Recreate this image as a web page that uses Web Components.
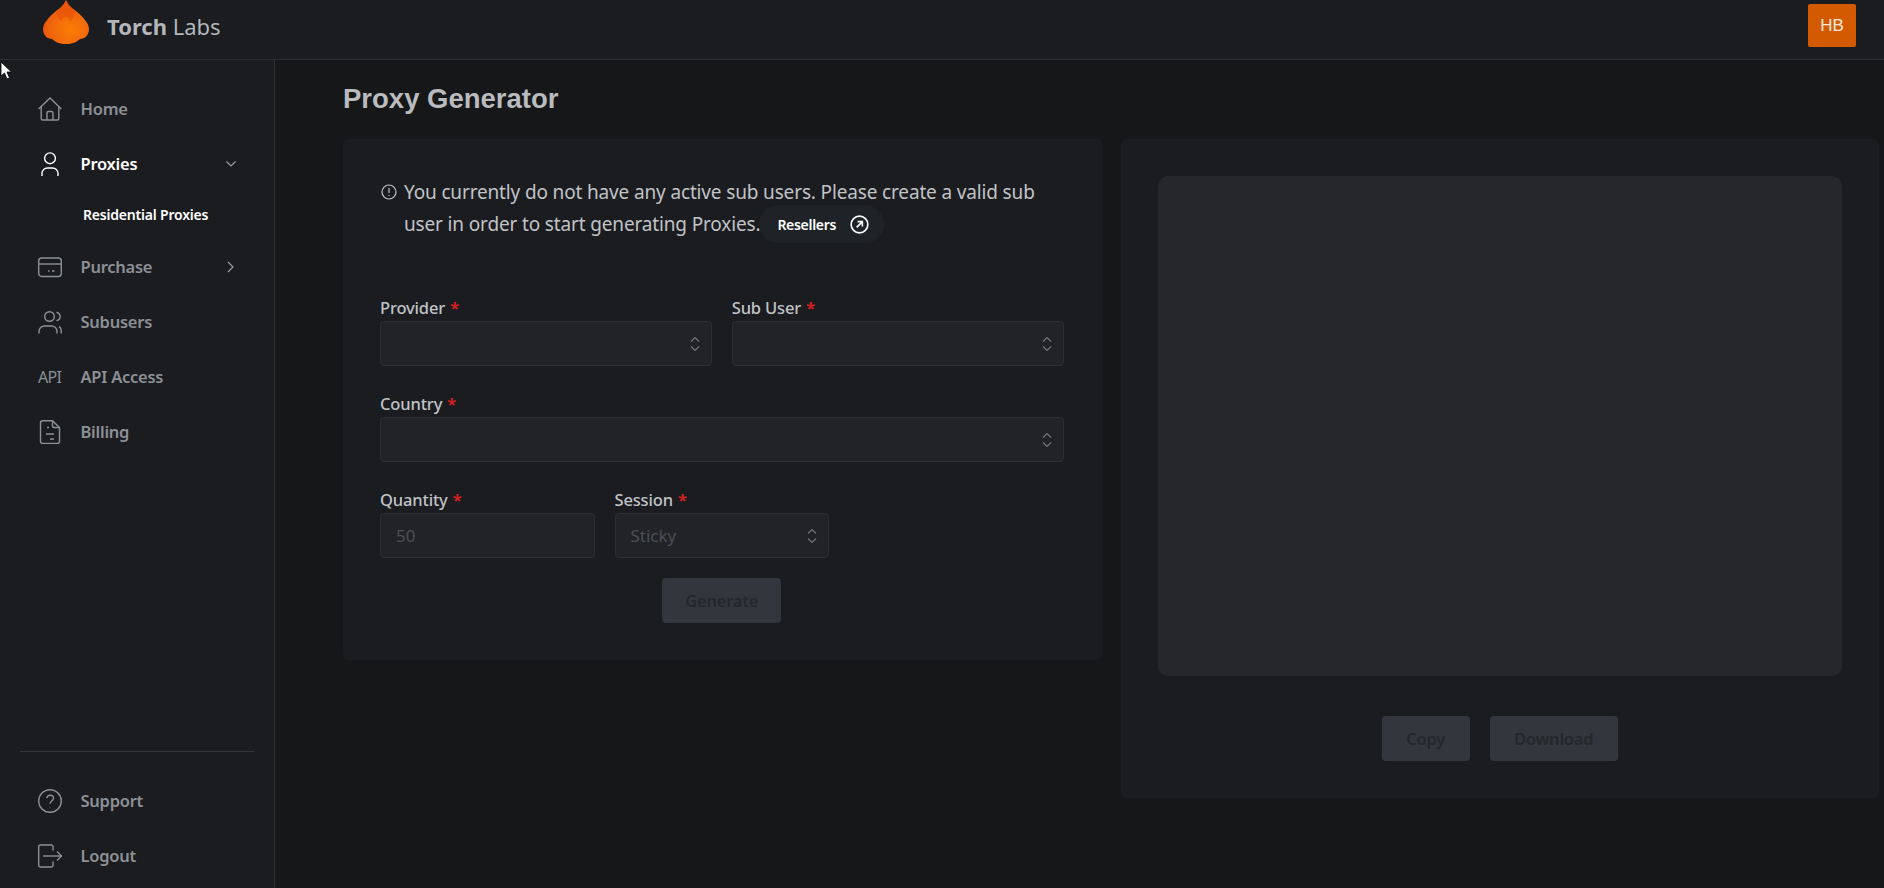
<!DOCTYPE html>
<html lang="en">
<head>
<meta charset="utf-8">
<title>Proxy Generator</title>
<style>
html, body { margin: 0; height: 100%; background: #151719; overflow: hidden; }
body { font-family: "Noto Sans", sans-serif; }
</style>
</head>
<body>
<app-shell>
    <proxy-form slot="left"></proxy-form>
    <output-panel slot="right"></output-panel>
</app-shell>
<mouse-cursor></mouse-cursor>

<script>
const ICONS = {
    home: `<path d="M0.700 12 12 1l11.300 11"/><path d="M3.200 9.500v12c0 .8.700 1.500 1.500 1.500h14.600c.8 0 1.500-.7 1.500-1.500v-12"/><path d="M9 23v-7c0-.8.700-1.500 1.500-1.500h3c.8 0 1.500.7 1.500 1.500v7"/>`,
    user: `<circle cx="12" cy="6.300" r="5.400"/><path d="M4 24v-2.500c0-3.200 2.600-5.500 5.500-5.500h5c2.900 0 5.500 2.300 5.500 5.500V24"/>`,
    card: `<rect x="0.700" y="3" width="22.600" height="18.500" rx="3"/><path d="M1 9h22"/><path d="M10 16h1.500M14 16h2.500"/>`,
    users: `<circle cx="11.500" cy="6.500" r="4.800"/><path d="M18.500 2.200c2.400.6 3.600 2.300 3.600 4.200s-1.200 3.600-3.600 4.200"/><path d="M1 23.500v-2c0-3.200 2.600-5.500 5.500-5.500h7c3 0 5.500 2.300 5.500 5.500v2"/><path d="M21 16.300c1.300.8 2.200 2.500 2.200 4.200v3"/>`,
    bill: `<path d="M14.500 0.700H4.500c-1 0-2 .9-2 2v18.800c0 1 1 2 2 2h15c1 0 2-1 2-2V7.500L14.500 0.700z"/><path d="M14.500 1.200V6c0 1 .6 1.500 1.500 1.500h5"/><path d="M9 7.500h2M8 14h8M12 19h4"/>`,
    help: `<circle cx="12" cy="12" r="11.300"/><path d="M8.800 9.200c.3-1.900 1.700-3 3.400-3 1.900 0 3.300 1.300 3.300 3 0 2.800-3.500 2.900-3.500 5.600"/><path d="M12 18.200v.3"/>`,
    logout: `<path d="M15 6.500V2.700c0-1-.8-1.700-1.700-1.700H2.200C1.300 1 .7 1.700.7 2.700v18.600c0 1 .6 1.700 1.500 1.700h11.100c.9 0 1.700-.7 1.700-1.700v-3.800"/><path d="M5 12h18.500"/><path d="M19 7.500l4.500 4.500-4.500 4.500"/>`
}

class AppShell extends HTMLElement {
    constructor(){
        super()
        this.attachShadow({mode:"open"})
        this.shadowRoot.innerHTML = `
        <style>
        :host { display: flex; flex-direction: column; height: 888px; }
        .body { flex: 1; display: flex; min-height: 0; }
        main { flex: 1; min-width: 0; padding: 24px 5px 0 68px; }
        h1 {
            margin: 0 0 25px;
            font: bold 27.500px/30px "Liberation Sans", sans-serif;
            color: #b9bbbf;
        }
        .cols { display: grid; grid-template-columns: 1fr 1fr; gap: 19px; align-items: start; }
        </style>
        <top-bar></top-bar>
        <div class="body">
            <side-nav></side-nav>
            <main>
                <h1>Proxy Generator</h1>
                <div class="cols">
                    <slot name="left"></slot>
                    <slot name="right"></slot>
                </div>
            </main>
        </div>`
    }
}

class TopBar extends HTMLElement {
    constructor(){
        super()
        this.attachShadow({mode:"open"})
        this.shadowRoot.innerHTML = `
        <style>
        :host {
            display: flex; height: 59px; flex: none;
            background: #1a1c20; border-bottom: 1px solid #2d2f32;
            padding: 0 28px 0 43px; overflow: hidden;
        }
        svg { width: 46px; height: 44px; flex: none; }
        .name {
            margin: 9px 0 0 18px;
            font: 400 22px/34px "Noto Sans", sans-serif;
            color: #b4b6ba; height: 34px;
        }
        .name b { font-weight: 700; }
        .avatar {
            margin: 4px 0 0 auto; width: 48px; height: 43px;
            background: #d45a00; border-radius: 2px;
            display: flex; align-items: center; justify-content: center;
            font: 400 17px "Liberation Sans", sans-serif; color: #fbe9dc;
        }
        </style>
        <svg viewBox="0 0 46 44">
            <defs>
                <radialGradient id="fl" cx="0.600" cy="0.680" r="0.620">
                    <stop offset="0" stop-color="#fa7d05"/>
                    <stop offset="0.600" stop-color="#f2690b"/>
                    <stop offset="1" stop-color="#e8560e"/>
                </radialGradient>
            </defs>
            <path fill="url(#fl)" d="M23 0C21.500 3 20 5.500 18 7.500L13 11C7 16 0 23 0 29C0 35 4 39 9 39C12 42 17 44 23 44C29 44 34 42 37 39C42 39 46 35 46 29C46 23 39 16 33 11L28 7.500C26 5.500 24.500 3 23 0Z"/>
            <path fill="#e85209" opacity="0.700" d="M23 0C25 4 27 6.500 33 11C32 15 30 19 27 21C26 18 24.500 17 22.500 17C20.500 17 19 19 18 21C15 18 13.500 15 13 11C19 6.500 21 4 23 0Z"/>
        </svg>
        <div class="name"><b>Torch</b> Labs</div>
        <div class="avatar">HB</div>`
    }
}

class SideNav extends HTMLElement {
    constructor(){
        super()
        this.attachShadow({mode:"open"})
        this.shadowRoot.innerHTML = `
        <style>
        :host {
            display: flex; flex-direction: column; flex: none;
            width: 274px; background: #1a1c20; border-right: 1px solid #2d2f32;
            padding: 21px 0 5px; box-sizing: content-box;
        }
        .sub {
            height: 46px; padding: 0 0 2px 83px;
            display: flex; align-items: center;
            font: 600 14px "Noto Sans", sans-serif; color: #fff;
            letter-spacing: -0.200px;
        }
        .foot { margin-top: auto; }
        hr { margin: 0 20px 21px; border: 0; border-top: 1px solid #34363a; }
        </style>
        <nav-item icon="home">Home</nav-item>
        <nav-item icon="user" active chevron="down">Proxies</nav-item>
        <div class="sub">Residential Proxies</div>
        <nav-item icon="card" chevron="right">Purchase</nav-item>
        <nav-item icon="users">Subusers</nav-item>
        <nav-item api>API Access</nav-item>
        <nav-item icon="bill">Billing</nav-item>
        <div class="foot">
            <hr>
            <nav-item icon="help">Support</nav-item>
            <nav-item icon="logout">Logout</nav-item>
        </div>`
    }
}

class NavItem extends HTMLElement {
    constructor(){
        super()
        const icon = this.getAttribute("icon")
        const chevron = this.getAttribute("chevron")
        const api = this.hasAttribute("api")

        this.attachShadow({mode:"open"})
        let left = `<svg class="ic" viewBox="0 0 24 24"><g>${ICONS[icon] || ""}</g></svg>`
        if (api) left = `<span class="api">API</span>`

        let right = ""
        if (chevron == "down") right = `<svg class="chev" viewBox="0 0 12 12"><path d="M1.500 3.500 6 8l4.500-4.500"/></svg>`
        if (chevron == "right") right = `<svg class="chev" viewBox="0 0 12 12"><path d="M3 1l5 5-5 5"/></svg>`

        this.shadowRoot.innerHTML = `
        <style>
        :host {
            display: flex; align-items: center; height: 55px;
            padding-left: 38px; color: #8d9095;
            font: 600 16.500px "Noto Sans", sans-serif; letter-spacing: -0.250px;
        }
        :host([active]) { color: #fff; }
        .ic { width: 24px; height: 24px; flex: none; margin-right: 18.500px; fill: none; stroke: currentColor; stroke-width: 1.400; }
        .api { width: 24px; flex: none; margin-right: 18.500px; font: 400 16px "Noto Sans", sans-serif; letter-spacing: -0.700px; }
        .chev { width: 12px; height: 12px; margin-left: auto; margin-right: 37px; fill: none; stroke: #a0a2a6; stroke-width: 1.100; }
        </style>
        ${left}<slot></slot>${right}`
    }
}

class FormField extends HTMLElement {
    constructor(){
        super()
        const label = this.getAttribute("label")
        const value = this.getAttribute("value") || ""
        const select = this.hasAttribute("select")

        this.attachShadow({mode:"open"})
        this.shadowRoot.innerHTML = `
        <style>
        :host { display: block; min-width: 0; }
        label {
            display: block; height: 26px;
            font: 500 16.500px/26px "Noto Sans", sans-serif;
            color: #c1c3c7; letter-spacing: -0.150px;
        }
        label i { font-style: normal; font-weight: 700; color: #d42020; margin-left: 1px; }
        .box {
            height: 45px; box-sizing: border-box;
            background: #212327; border: 1px solid #2c2e32; border-radius: 4px;
            display: flex; align-items: center; justify-content: space-between;
            padding: 0 11px 0 15px;
            font: 400 17px "Noto Sans", sans-serif; color: #4c4e52;
        }
        svg { width: 10px; height: 16px; fill: none; stroke: #75777b; stroke-width: 1.100; flex: none; }
        </style>
        <label>${label} <i>*</i></label>
        <div class="box">
            <span>${value}</span>
            ${select ? `<svg viewBox="0 0 10 16"><path d="M1 5.500 5 1.500l4 4M1 10.500l4 4 4-4"/></svg>` : ""}
        </div>`
    }
}

class ProxyForm extends HTMLElement {
    constructor(){
        super()
        this.attachShadow({mode:"open"})
        this.shadowRoot.innerHTML = `
        <style>
        :host {
            display: block; background: #1a1c20; border-radius: 5px;
            padding: 37px 38px 37px 37px; color: #c1c3c7;
        }
        .info {
            display: flex; gap: 7px; height: 70px; margin-bottom: 49px;
            font: 400 19px/32px "Noto Sans", sans-serif; letter-spacing: -0.150px;
            white-space: nowrap;
        }
        .info > svg { width: 16px; height: 16px; flex: none; margin: 8px 0 0 1px; fill: none; stroke: #c1c3c7; stroke-width: 1.200; }
        .grid { display: grid; gap: 25px 20px; }
        .two { grid-template-columns: 1fr 1fr; }
        .three { grid-template-columns: 1fr 1fr 1fr; }
        .wide { grid-column: 1 / -1; }
        .act { display: flex; justify-content: center; margin-top: 20px; }
        </style>
        <div class="info">
            <svg viewBox="0 0 16 16"><circle cx="8" cy="8" r="7"/><path d="M8 4v5M8 11v1"/></svg>
            <div>
                <div>You currently do not have any active sub users. Please create a valid sub</div>
                <div>user in order to start generating Proxies.<link-chip>Resellers</link-chip></div>
            </div>
        </div>
        <div class="grid two">
            <form-field label="Provider" select></form-field>
            <form-field label="Sub User" select></form-field>
            <form-field class="wide" label="Country" select></form-field>
        </div>
        <div class="grid three" style="margin-top:25px">
            <form-field label="Quantity" value="50"></form-field>
            <form-field label="Session" value="Sticky" select></form-field>
        </div>
        <div class="act"><dim-button width="119">Generate</dim-button></div>`
    }
}

class LinkChip extends HTMLElement {
    constructor(){
        super()
        this.attachShadow({mode:"open"})
        this.shadowRoot.innerHTML = `
        <style>
        :host {
            display: inline-flex; align-items: center; gap: 14px; vertical-align: middle;
            height: 38px; margin: -3px 0 0 -1px; padding: 0 15px 0 18px;
            background: #1f2327; border-radius: 19px; color: #fff;
            font: 600 14px "Noto Sans", sans-serif; letter-spacing: -0.300px;
        }
        svg { width: 19px; height: 19px; fill: none; stroke: #fff; stroke-width: 1.700; }
        </style>
        <slot></slot>
        <svg viewBox="0 0 20 20"><circle cx="10" cy="10" r="8.800"/><path d="M7 13l6-6M8 7h5v5"/></svg>`
    }
}

class DimButton extends HTMLElement {
    constructor(){
        super()
        const width = this.getAttribute("width")
        this.attachShadow({mode:"open"})
        this.shadowRoot.innerHTML = `
        <style>
        :host {
            display: flex; align-items: center; justify-content: center;
            width: ${width}px; height: 45px; border-radius: 4px;
            background: #33363d; color: #25272b;
            font: 600 16.500px "Noto Sans", sans-serif; letter-spacing: -0.200px;
        }
        </style>
        <slot></slot>`
    }
}

class OutputPanel extends HTMLElement {
    constructor(){
        super()
        this.attachShadow({mode:"open"})
        this.shadowRoot.innerHTML = `
        <style>
        :host { display: block; background: #1a1c20; border-radius: 5px; padding: 37px; }
        .out { height: 500px; background: #25272b; border-radius: 10px; }
        .act { display: flex; justify-content: center; gap: 20px; margin-top: 40px; }
        </style>
        <div class="out"></div>
        <div class="act">
            <dim-button width="88">Copy</dim-button>
            <dim-button width="128">Download</dim-button>
        </div>`
    }
}

class MouseCursor extends HTMLElement {
    constructor(){
        super()
        this.attachShadow({mode:"open"})
        this.shadowRoot.innerHTML = `
        <style>
        :host { position: absolute; left: 0; top: 61px; width: 13px; height: 20px; }
        svg { display: block; }
        </style>
        <svg width="13" height="20" viewBox="0 0 13 20"><path d="M1 1v14l3.500-3 2.500 6 2.500-1-2.500-6h4.500z" fill="#fff" stroke="#000" stroke-width="0.800"/></svg>`
    }
}

customElements.define("nav-item", NavItem)
customElements.define("side-nav", SideNav)
customElements.define("top-bar", TopBar)
customElements.define("dim-button", DimButton)
customElements.define("link-chip", LinkChip)
customElements.define("form-field", FormField)
customElements.define("proxy-form", ProxyForm)
customElements.define("output-panel", OutputPanel)
customElements.define("mouse-cursor", MouseCursor)
customElements.define("app-shell", AppShell)
</script>
</body>
</html>
